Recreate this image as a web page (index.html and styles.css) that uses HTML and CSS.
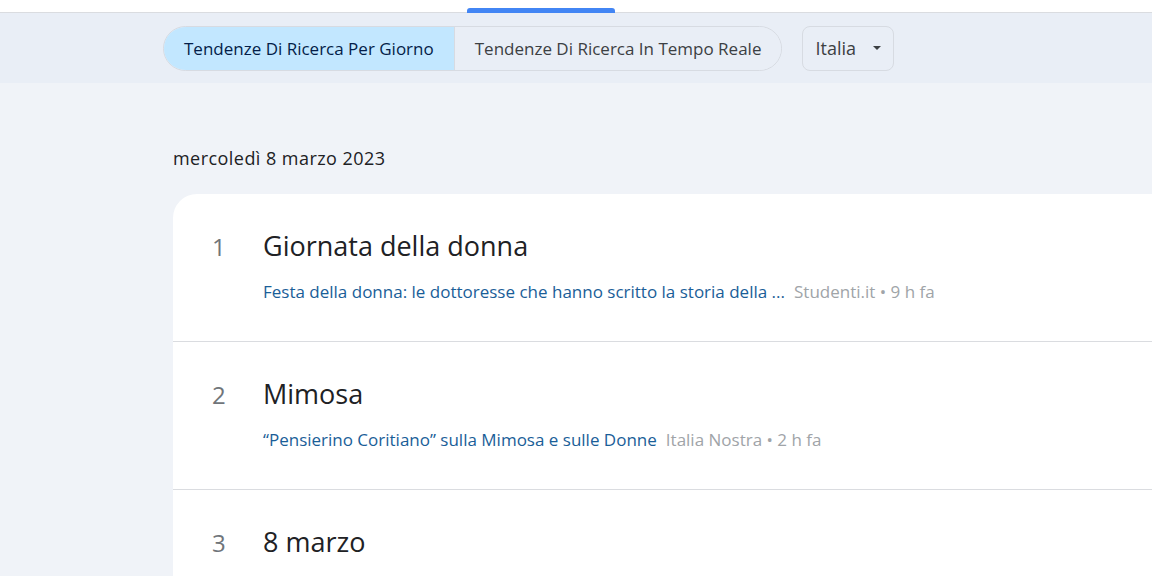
FILE: index.html
```html
<!DOCTYPE html>
<html lang="it">
<head>
<meta charset="utf-8">
<link rel="stylesheet" href="styles.css">
</head>
<body>
<div class="topstrip"><div class="indicator"></div></div>
<header class="band">
  <div class="tabs">
    <div class="tab active">Tendenze Di Ricerca Per Giorno</div>
    <div class="tab">Tendenze Di Ricerca In Tempo Reale</div>
  </div>
  <div class="select">Italia <span class="caret"></span></div>
</header>
<main class="content">
  <div class="date">mercoledì 8 marzo 2023</div>
  <section class="card">
    <div class="row">
      <div class="num">1</div>
      <div class="body">
        <div class="title">Giornata della donna</div>
        <div class="sub"><span class="link">Festa della donna: le dottoresse che hanno scritto la storia della ...</span><span class="src">Studenti.it • 9 h fa</span></div>
      </div>
    </div>
    <div class="row">
      <div class="num">2</div>
      <div class="body">
        <div class="title">Mimosa</div>
        <div class="sub"><span class="link">“Pensierino Coritiano” sulla Mimosa e sulle Donne</span><span class="src">Italia Nostra • 2 h fa</span></div>
      </div>
    </div>
    <div class="row">
      <div class="num">3</div>
      <div class="body">
        <div class="title">8 marzo</div>
      </div>
    </div>
  </section>
</main>
</body>
</html>
```
FILE: styles.css
```css
html, body { margin: 0; padding: 0; }
body {
  width: 1152px;
  height: 576px;
  overflow: hidden;
  background: #f0f3f8;
  font-family: "Open Sans", "Noto Sans", sans-serif;
  color: #202124;
}
.topstrip {
  height: 12px;
  background: #fff;
  border-bottom: 1px solid #dadce0;
  position: relative;
}
.indicator {
  position: absolute;
  left: 467px;
  top: 8px;
  width: 148px;
  height: 5px;
  background: #4285f4;
  border-radius: 3px 3px 0 0;
}
.band {
  height: 70px;
  background: #e9eef6;
  display: flex;
  align-items: center;
  padding-left: 163px;
  gap: 20px;
}
.tabs {
  display: flex;
  height: 45px;
  border-radius: 23px;
  overflow: hidden;
  border: 1px solid #d7dbe2;
  box-sizing: border-box;
}
.tab {
  display: flex;
  align-items: center;
  padding: 0 20px;
  font-size: 17px;
  color: #3c4043;
  background: #e9eef6;
  white-space: nowrap;
}
.tab.active {
  background: #c2e7ff;
  color: #041e49;
  border-right: 1px solid #d7dbe2;
}
.select {
  height: 45px;
  box-sizing: border-box;
  width: 92px;
  border: 1px solid #d7dbe2;
  border-radius: 8px;
  display: flex;
  align-items: center;
  padding-left: 12px;
  font-size: 18px;
  color: #3c4043;
  gap: 17px;
}
.caret {
  width: 0; height: 0;
  border-left: 4px solid transparent;
  border-right: 4px solid transparent;
  border-top: 4px solid #3c4043;
}
.content {
  padding-left: 173px;
  padding-top: 64px;
}
.date {
  font-size: 18px;
  letter-spacing: 0.45px;
  color: #202124;
  height: 22px;
  line-height: 22px;
  margin-bottom: 25px;
}
.card {
  background: #fff;
  width: 1100px;
  border-radius: 24px 0 0 0;
}
.row {
  display: flex;
  height: 148px;
  border-bottom: 1px solid #dadce0;
  box-sizing: border-box;
}
.num {
  width: 90px;
  padding-left: 39px;
  box-sizing: border-box;
  font-size: 24px;
  color: #70757a;
  padding-top: 36px;
}
.body { padding-top: 34px; }
.title {
  font-size: 27px;
  line-height: 36px;
  color: #202124;
}
.sub {
  margin-top: 18px;
  font-size: 17px;
  line-height: 20px;
}
.link { color: #1a5e98; margin-right: 9px; }
.src { color: #a0a4a8; }
```
